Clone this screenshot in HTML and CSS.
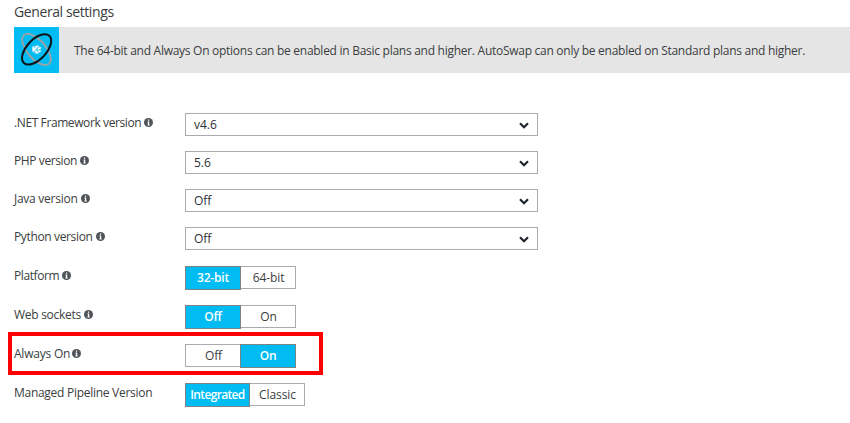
FILE: index.html
```html
<!DOCTYPE html>
<html lang="en">
<head>
<meta charset="utf-8">
<title>General settings</title>
<link rel="stylesheet" href="styles.css">
</head>
<body>
<svg width="0" height="0" class="defs" aria-hidden="true">
  <symbol id="info" viewBox="0 0 9 9"><circle cx="4.5" cy="4.5" r="4.5" fill="#505357"/><path d="M3.9 1.5h1.3v1.2H3.9zM3.5 3.5h1.7v3h.5v.9H3.4v-.9h.5V4.4h-.4z" fill="#fff"/></symbol>
  <symbol id="chevron" viewBox="0 0 10 7"><path d="M1 1.2l4 4 4-4" fill="none" stroke="#20252b" stroke-width="2.2"/></symbol>
</svg>
<main>
  <h1>General settings</h1>
  <section class="banner">
    <div class="logo">
      <svg width="45" height="46" viewBox="0 0 45 46">
        <ellipse cx="22.5" cy="22.5" rx="19" ry="9.2" transform="rotate(49 22.5 22.5)" fill="none" stroke="#a0a1a3" stroke-width="1.8"/>
        <ellipse cx="22.6" cy="22.4" rx="18.6" ry="9.8" transform="rotate(-47 22.6 22.4)" fill="none" stroke="#0b1418" stroke-width="2"/>
        <circle cx="22.6" cy="22.6" r="4.4" fill="#62d2f5"/>
        <path d="M19.2 19.4v5M19.8 23.3l2.6-3.6M22.6 19.2l2 .6M24 22.2l2.8-1.6M21.4 23.8l2.2 2.7M24.2 24.6l2.4-.4" fill="none" stroke="#fff" stroke-width="1.5"/>
      </svg>
    </div>
    <p>The 64-bit and Always On options can be enabled in Basic plans and higher. AutoSwap can only be enabled on Standard plans and higher.</p>
  </section>
  <form>
    <div class="row"><label><span>.NET Framework version</span><svg class="info"><use href="#info"/></svg></label><div class="select">v4.6<svg class="chevron"><use href="#chevron"/></svg></div></div>
    <div class="row"><label><span>PHP version</span><svg class="info"><use href="#info"/></svg></label><div class="select">5.6<svg class="chevron"><use href="#chevron"/></svg></div></div>
    <div class="row"><label><span class="t-java">Java version</span><svg class="info"><use href="#info"/></svg></label><div class="select">Off<svg class="chevron"><use href="#chevron"/></svg></div></div>
    <div class="row"><label><span class="t-python">Python version</span><svg class="info"><use href="#info"/></svg></label><div class="select">Off<svg class="chevron"><use href="#chevron"/></svg></div></div>
    <div class="row toggle-row"><label><span>Platform</span><svg class="info"><use href="#info"/></svg></label><div class="toggle"><span class="on">32-bit</span><span>64-bit</span></div></div>
    <div class="row toggle-row"><label><span class="t-web">Web sockets</span><svg class="info"><use href="#info"/></svg></label><div class="toggle"><span class="on">Off</span><span>On</span></div></div>
    <div class="row toggle-row marked"><label><span class="t-always">Always On</span><svg class="info"><use href="#info"/></svg></label><div class="toggle"><span>Off</span><span class="on">On</span></div></div>
    <div class="row toggle-row"><label><span class="t-pipe">Managed Pipeline Version</span></label><div class="toggle wide"><span class="on">Integrated</span><span>Classic</span></div></div>
  </form>
</main>
</body>
</html>
```
FILE: styles.css
```css
*, *::after { box-sizing: border-box; }
body { margin: 0; background: #fff; color: #3b3d40; font: 12px/16px "Open Sans", "Noto Sans", sans-serif; overflow: hidden; }
.defs { position: absolute; }
main { padding-left: 14px; }
h1 { margin: 0; height: 27px; padding-top: 2px; font-size: 14px; font-weight: 400; line-height: 19px; letter-spacing: -0.4px; }
.banner { display: flex; height: 46px; background: #e5e5e5; }
.logo { width: 45px; background: #00bcf2; }
.logo svg { display: block; }
.banner p { margin: 0; padding: 16px 0 0 15px; white-space: nowrap; letter-spacing: -0.273px; }
form { padding-top: 40px; }
.row { display: flex; height: 23px; margin-bottom: 15px; position: relative; }
.toggle-row { margin-bottom: 16px; top: 1px; }
label { display: flex; width: 171px; height: 16px; margin-top: 2px; white-space: nowrap; letter-spacing: -0.4px; }
.t-java { letter-spacing: -0.26px; }
.t-python { letter-spacing: -0.36px; }
.t-web, .t-pipe { letter-spacing: -0.28px; }
.t-always { letter-spacing: -0.22px; }
.info { width: 9px; height: 9px; margin: 3px 0 0 3px; overflow: visible; }
.t-always + .info { margin-left: 2.3px; }
.select { display: flex; justify-content: space-between; width: 353px; height: 23px; padding: 3px 8px 0; border: 1px solid #aaabad; color: #2d3036; }
.chevron { width: 10px; height: 7px; margin-top: 5px; }
.toggle { display: grid; grid-template-columns: 55px 54px; width: 111px; border: 1px solid #aaabad; text-align: center; line-height: 22px; letter-spacing: -0.1px; }
.toggle span { margin: -1px 0; padding: 1px 0 0 1px; }
.toggle span:first-child { margin-left: -1px; }
.toggle span:last-child { margin-right: -1px; margin-left: -1px; }
.toggle .on { background: #00bcf2; border: 1px solid #7c8387; color: #fff; padding: 0; font-weight: 600; letter-spacing: -0.2px; }
.toggle.wide { width: 120px; grid-template-columns: 64px 54px; }
.toggle.wide .on { letter-spacing: -0.65px; }
.marked::after { content: ""; position: absolute; left: -6px; top: -12px; width: 315px; height: 43px; border: 4px solid #f00; }
```
